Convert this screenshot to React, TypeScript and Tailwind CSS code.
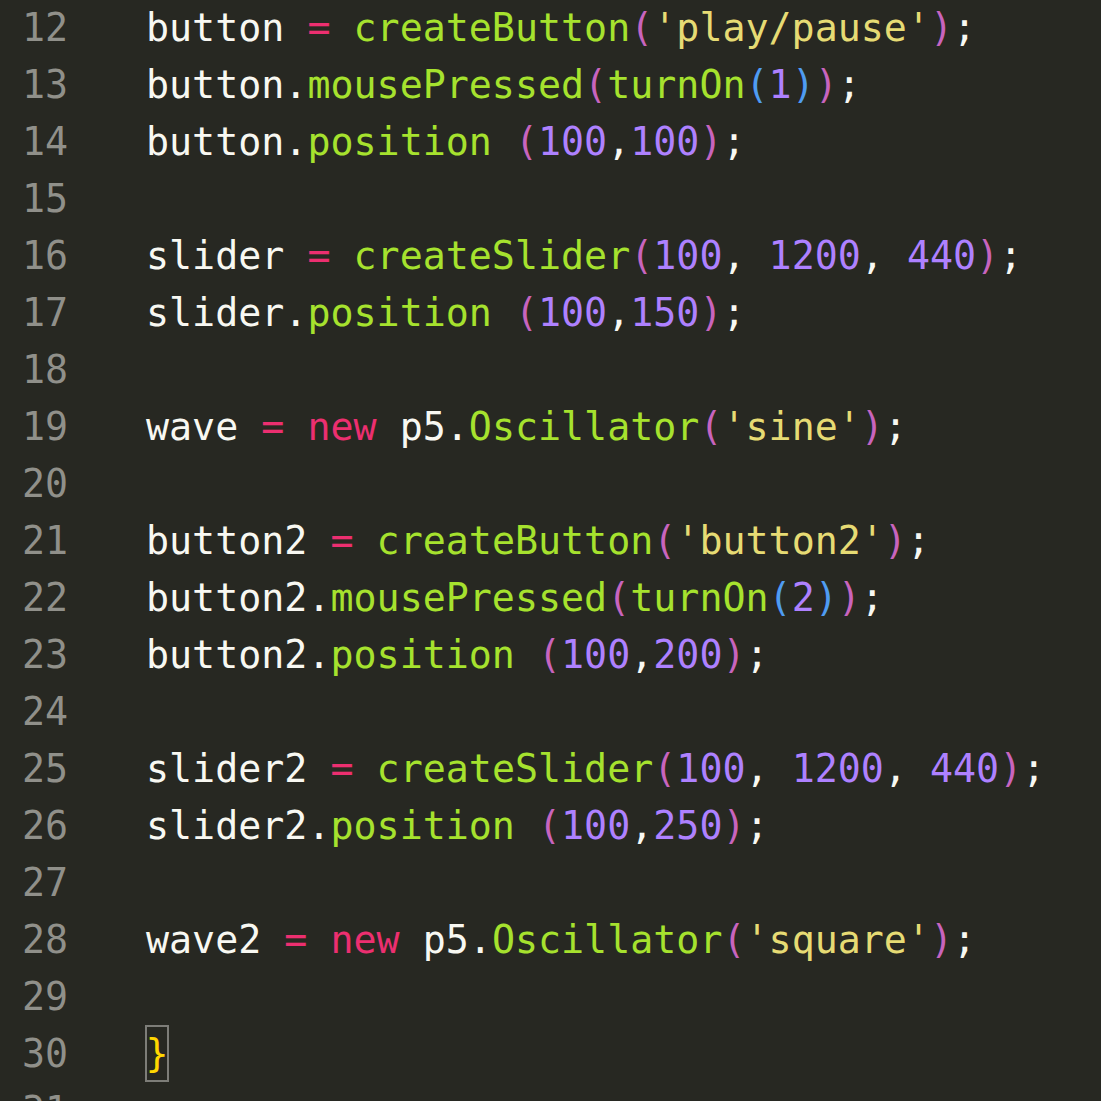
import React from "react";

type Tok = [string, string];

const W = "text-[#F8F8F2]";
const G = "text-[#A6E22E]";
const P = "text-[#EC2F70]";
const N = "text-[#AE81FF]";
const S = "text-[#E6DB74]";
const B1 = "text-[#C864BE]";
const B2 = "text-[#4F9CF2]";

const lines: { n: number; t: Tok[]; brace?: boolean }[] = [
  { n: 12, t: [["button ", W], ["=", P], [" ", W], ["createButton", G], ["(", B1], ["'play/pause'", S], [")", B1], [";", W]] },
  { n: 13, t: [["button.", W], ["mousePressed", G], ["(", B1], ["turnOn", G], ["(", B2], ["1", N], [")", B2], [")", B1], [";", W]] },
  { n: 14, t: [["button.", W], ["position", G], [" ", W], ["(", B1], ["100", N], [",", W], ["100", N], [")", B1], [";", W]] },
  { n: 15, t: [] },
  { n: 16, t: [["slider ", W], ["=", P], [" ", W], ["createSlider", G], ["(", B1], ["100", N], [", ", W], ["1200", N], [", ", W], ["440", N], [")", B1], [";", W]] },
  { n: 17, t: [["slider.", W], ["position", G], [" ", W], ["(", B1], ["100", N], [",", W], ["150", N], [")", B1], [";", W]] },
  { n: 18, t: [] },
  { n: 19, t: [["wave ", W], ["=", P], [" ", W], ["new", P], [" p5.", W], ["Oscillator", G], ["(", B1], ["'sine'", S], [")", B1], [";", W]] },
  { n: 20, t: [] },
  { n: 21, t: [["button2 ", W], ["=", P], [" ", W], ["createButton", G], ["(", B1], ["'button2'", S], [")", B1], [";", W]] },
  { n: 22, t: [["button2.", W], ["mousePressed", G], ["(", B1], ["turnOn", G], ["(", B2], ["2", N], [")", B2], [")", B1], [";", W]] },
  { n: 23, t: [["button2.", W], ["position", G], [" ", W], ["(", B1], ["100", N], [",", W], ["200", N], [")", B1], [";", W]] },
  { n: 24, t: [] },
  { n: 25, t: [["slider2 ", W], ["=", P], [" ", W], ["createSlider", G], ["(", B1], ["100", N], [", ", W], ["1200", N], [", ", W], ["440", N], [")", B1], [";", W]] },
  { n: 26, t: [["slider2.", W], ["position", G], [" ", W], ["(", B1], ["100", N], [",", W], ["250", N], [")", B1], [";", W]] },
  { n: 27, t: [] },
  { n: 28, t: [["wave2 ", W], ["=", P], [" ", W], ["new", P], [" p5.", W], ["Oscillator", G], ["(", B1], ["'square'", S], [")", B1], [";", W]] },
  { n: 29, t: [] },
  { n: 30, t: [], brace: true },
  { n: 31, t: [] },
];

export default function App() {
  return (
    <div
      className="h-[1101px] w-[1101px] overflow-hidden bg-[#272822] text-[38.3px] leading-[57px] whitespace-pre"
      style={{ fontFamily: '"DejaVu Sans Mono", "Liberation Mono", monospace' }}
    >
      <div className="-mt-px flex flex-col">
        {lines.map((l) => (
          <div key={l.n} className="flex h-[57px]">
            <div className="w-[146px] shrink-0 pl-[22px] text-[#90908A]">{l.n}</div>
            <div className="flex">
              {l.brace ? (
                <span className="-ml-px box-border flex h-[57px] w-[24px] items-center justify-center border-2 border-[#7D7D78] text-[#FFD700]">
                  {"}"}
                </span>
              ) : (
                l.t.map((tk, i) => (
                  <span key={i} className={tk[1]}>
                    {tk[0]}
                  </span>
                ))
              )}
            </div>
          </div>
        ))}
      </div>
    </div>
  );
}
